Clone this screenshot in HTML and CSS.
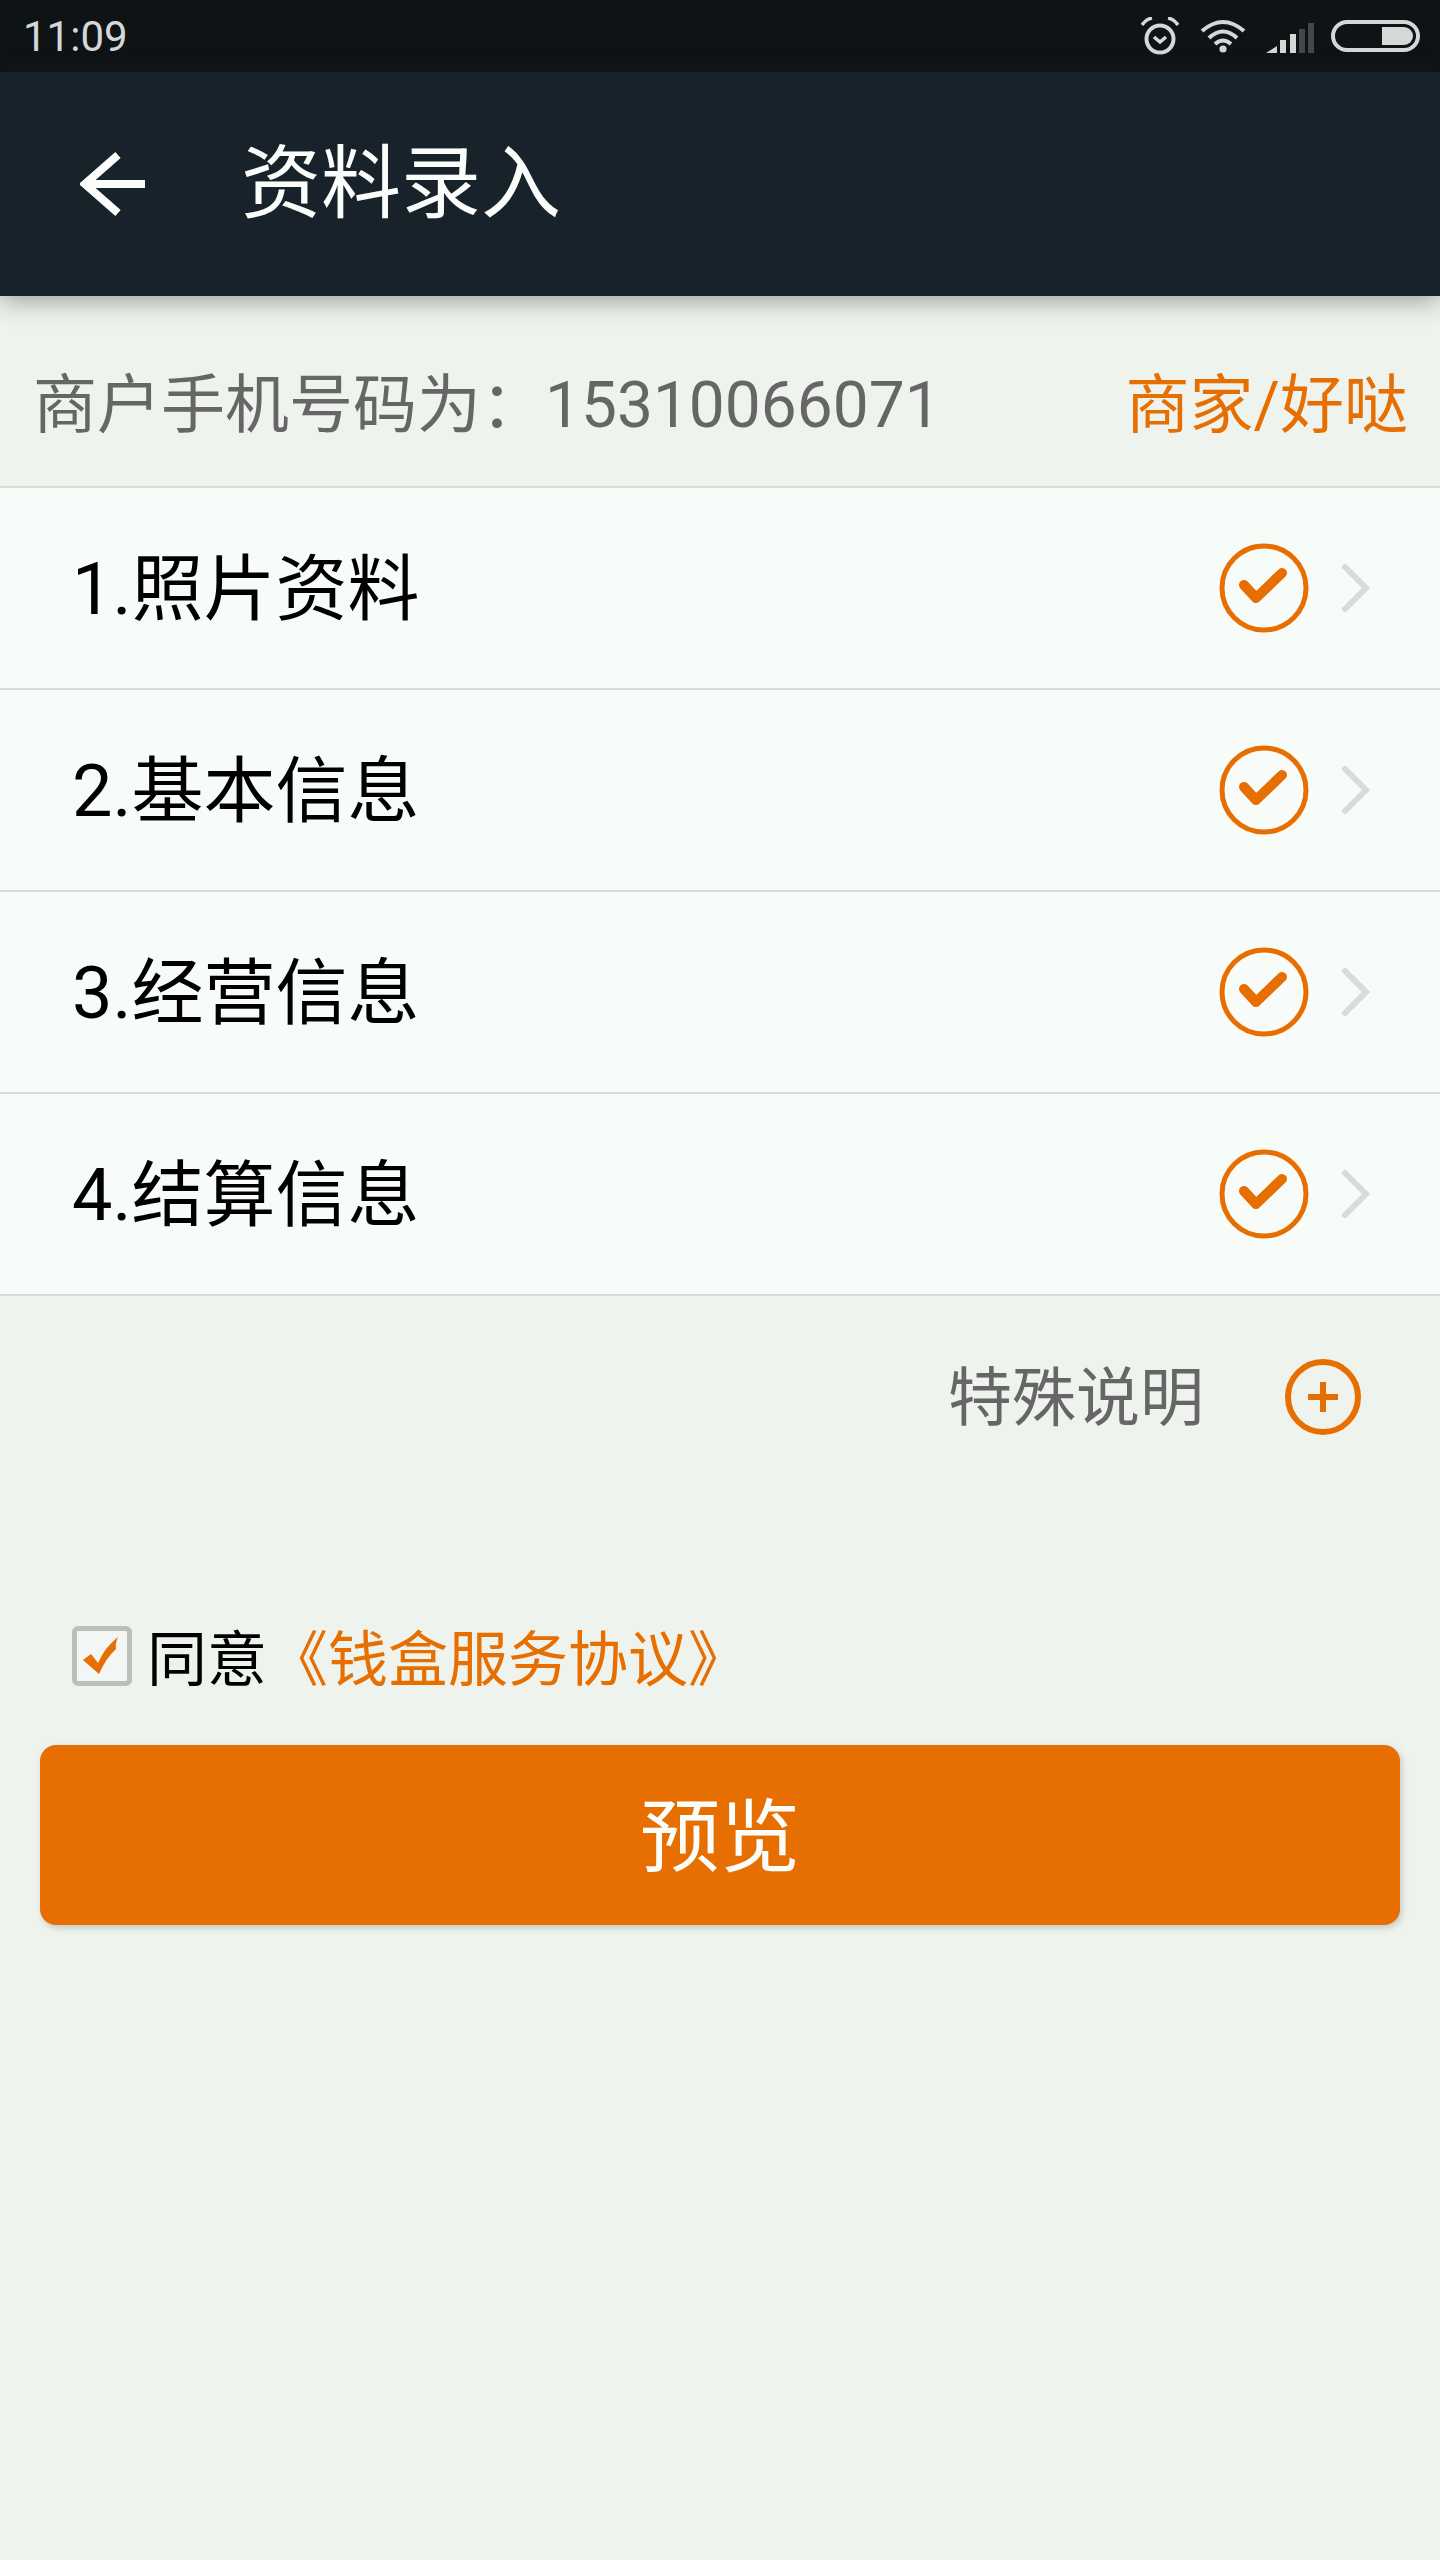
FILE: index.html
```html
<!DOCTYPE html>
<html lang="zh-CN">
<head>
  <meta charset="UTF-8">
  <title>资料录入</title>
  <link rel="stylesheet" href="styles.css">
</head>
<body>

<!-- Status bar -->
<div class="status-bar">
  <span class="time">11:09</span>
  <div class="status-icons">
    <svg class="ic-alarm" viewBox="0 0 38 38">
      <circle cx="19" cy="22" r="13.5" fill="none" stroke="#d5d8d6" stroke-width="4"/>
      <path d="M13 20l6 5 6-5" fill="none" stroke="#d5d8d6" stroke-width="3.5"/>
      <path d="M1 8Q5 2 11 1M37 8Q33 2 27 1" fill="none" stroke="#d5d8d6" stroke-width="3.5"/>
    </svg>
    <svg class="ic-wifi" viewBox="0 0 46 34">
      <path d="M2 12Q23-6 44 12M9 19Q23 6 37 19M15 25Q23 18 31 25" fill="none" stroke="#d5d8d6" stroke-width="4"/>
      <circle cx="23" cy="30" r="3.6" fill="#d5d8d6"/>
    </svg>
    <svg class="ic-signal" viewBox="0 0 48 30">
      <path d="M0 30L11 23V30Z" fill="#d5d8d6"/>
      <rect x="14" y="17" width="6" height="13" fill="#d5d8d6"/>
      <rect x="24" y="11" width="6" height="19" fill="#d5d8d6"/>
      <rect x="33" y="6" width="6" height="24" fill="#43474a"/>
      <rect x="42" y="0" width="6" height="30" fill="#43474a"/>
    </svg>
    <div class="battery"><div class="battery-level"></div></div>
  </div>
</div>

<!-- Header -->
<div class="app-header">
  <svg class="ic-back" viewBox="0 0 65 64">
    <path d="M38 3L5 32L38 61M5 32H65" fill="none" stroke="#fbfdfa" stroke-width="8"/>
  </svg>
  <h1>资料录入</h1>
</div>

<div class="merchant-row">
  <span class="merchant-phone">商户手机号码为：15310066071</span>
  <span class="merchant-name">商家/好哒</span>
</div>

<div class="step-list">
  <div class="step-row">
    <span class="step-name">1.照片资料</span>
    <svg class="ic-done" viewBox="0 0 90 90">
      <circle cx="45" cy="45" r="42" fill="none" stroke="#e76e00" stroke-width="5"/>
      <path d="M25 42L37 55L63 30" fill="none" stroke="#e76e00" stroke-width="10" stroke-linecap="round" stroke-linejoin="round"/>
    </svg>
    <svg class="ic-chevron" viewBox="0 0 28 48">
      <path d="M3 3L24 24L3 45" fill="none" stroke="#d8dcd8" stroke-width="6" stroke-linecap="round"/>
    </svg>
  </div>
  <div class="step-row">
    <span class="step-name">2.基本信息</span>
    <svg class="ic-done" viewBox="0 0 90 90">
      <circle cx="45" cy="45" r="42" fill="none" stroke="#e76e00" stroke-width="5"/>
      <path d="M25 42L37 55L63 30" fill="none" stroke="#e76e00" stroke-width="10" stroke-linecap="round" stroke-linejoin="round"/>
    </svg>
    <svg class="ic-chevron" viewBox="0 0 28 48">
      <path d="M3 3L24 24L3 45" fill="none" stroke="#d8dcd8" stroke-width="6" stroke-linecap="round"/>
    </svg>
  </div>
  <div class="step-row">
    <span class="step-name">3.经营信息</span>
    <svg class="ic-done" viewBox="0 0 90 90">
      <circle cx="45" cy="45" r="42" fill="none" stroke="#e76e00" stroke-width="5"/>
      <path d="M25 42L37 55L63 30" fill="none" stroke="#e76e00" stroke-width="10" stroke-linecap="round" stroke-linejoin="round"/>
    </svg>
    <svg class="ic-chevron" viewBox="0 0 28 48">
      <path d="M3 3L24 24L3 45" fill="none" stroke="#d8dcd8" stroke-width="6" stroke-linecap="round"/>
    </svg>
  </div>
  <div class="step-row">
    <span class="step-name">4.结算信息</span>
    <svg class="ic-done" viewBox="0 0 90 90">
      <circle cx="45" cy="45" r="42" fill="none" stroke="#e76e00" stroke-width="5"/>
      <path d="M25 42L37 55L63 30" fill="none" stroke="#e76e00" stroke-width="10" stroke-linecap="round" stroke-linejoin="round"/>
    </svg>
    <svg class="ic-chevron" viewBox="0 0 28 48">
      <path d="M3 3L24 24L3 45" fill="none" stroke="#d8dcd8" stroke-width="6" stroke-linecap="round"/>
    </svg>
  </div>
</div>

<div class="note-row">
  <span class="note-text">特殊说明</span>
  <svg class="ic-plus" viewBox="0 0 76 76">
    <circle cx="38" cy="38" r="35" fill="none" stroke="#e76e00" stroke-width="6"/>
    <path d="M23 38H53M38 23V53" fill="none" stroke="#e76e00" stroke-width="6"/>
  </svg>
</div>

<div class="agree-row">
  <div class="checkbox">
    <svg viewBox="0 0 44 44">
      <path d="M3 26L11 20L18 29Q25 13 38 3Q35 10 36 15Q26 24 19 40Z" fill="#e76e00"/>
    </svg>
  </div>
  <span class="agree-text">同意</span>
  <span class="agree-link">《钱盒服务协议》</span>
</div>

<button class="btn-preview">预览</button>

</body>
</html>
```

FILE: styles.css
```css
* { margin: 0; padding: 0; box-sizing: border-box; }

html, body {
  height: 100%;
}

body {
  font-family: Roboto, "Noto Sans CJK SC", sans-serif;
  background: #eff3ee;
  color: #000;
}

.status-bar {
  height: 72px;
  background: #0e1316;
  display: flex;
  align-items: center;
  justify-content: space-between;
  padding: 0 20px 0 23px;
}

.time {
  font-size: 42px;
  color: #d5d8d6;
}

.status-icons {
  display: flex;
  align-items: center;
}

.ic-alarm { width: 38px; height: 38px; margin-right: 21px; }
.ic-wifi { width: 46px; height: 34px; margin-right: 20px; }
.ic-signal { width: 48px; height: 30px; margin-right: 17px; margin-top: 4px; }

.battery {
  width: 89px;
  height: 32px;
  border: 4px solid #d5d8d6;
  border-radius: 16px;
  padding: 3px 3px 3px 47px;
}

.battery-level {
  height: 100%;
  background: #d5d8d6;
  border-radius: 0 10px 10px 0;
}

.app-header {
  height: 224px;
  background: #17222b;
  display: flex;
  align-items: center;
  padding-left: 80px;
  box-shadow: 0 4px 24px rgba(40, 45, 40, 0.45);
  position: relative;
}

.ic-back { width: 65px; height: 64px; flex: none; }

.app-header h1 {
  font-size: 80px;
  font-weight: 400;
  color: #fbfdfa;
  margin-left: 96px;
  line-height: 1;
}

.merchant-row {
  height: 192px;
  display: flex;
  align-items: center;
  justify-content: space-between;
  padding: 0 32px 0 33px;
  border-bottom: 2px solid #d8dcd8;
  font-size: 64px;
}

.merchant-phone { color: #666; margin-top: 16px; }
.merchant-name { color: #e76e00; margin-top: 16px; }

.step-list { background: #f8fcf8; }

.step-row {
  height: 202px;
  display: flex;
  align-items: center;
  padding: 0 70px 0 72px;
  border-bottom: 2px solid #d8dcd8;
}

.step-name {
  font-size: 72px;
  flex: 1;
  margin-bottom: 12px;
}

.ic-done { width: 90px; height: 90px; margin-right: 33px; }
.ic-chevron { width: 28px; height: 48px; }

.note-row {
  height: 202px;
  display: flex;
  align-items: center;
  justify-content: flex-end;
  padding-right: 79px;
  font-size: 64px;
  color: #666;
}

.note-text { margin-bottom: 10px; margin-right: -1px; }

.ic-plus { width: 76px; height: 76px; margin-left: 82px; }

.agree-row {
  height: 60px;
  margin-top: 128px;
  display: flex;
  align-items: center;
  padding-left: 72px;
}

.checkbox {
  width: 60px;
  height: 60px;
  border: 5px solid #bcbfbc;
  border-radius: 6px;
  background: #f2f6f5;
  padding: 3px;
}

.checkbox svg { display: block; width: 100%; height: 100%; }

.agree-text {
  font-size: 60px;
  margin-left: 15px;
  margin-bottom: 4px;
}

.agree-link {
  font-size: 60px;
  color: #e76e00;
  margin-left: 1px;
  margin-bottom: 4px;
}

.btn-preview {
  display: block;
  width: 1360px;
  height: 180px;
  margin: 59px 40px 0;
  padding-bottom: 10px;
  background: #e76e00;
  border: none;
  border-radius: 16px;
  color: #fbfdfa;
  font-family: inherit;
  font-size: 80px;
  box-shadow: 2px 3px 6px rgba(120, 130, 130, 0.35);
}
```
